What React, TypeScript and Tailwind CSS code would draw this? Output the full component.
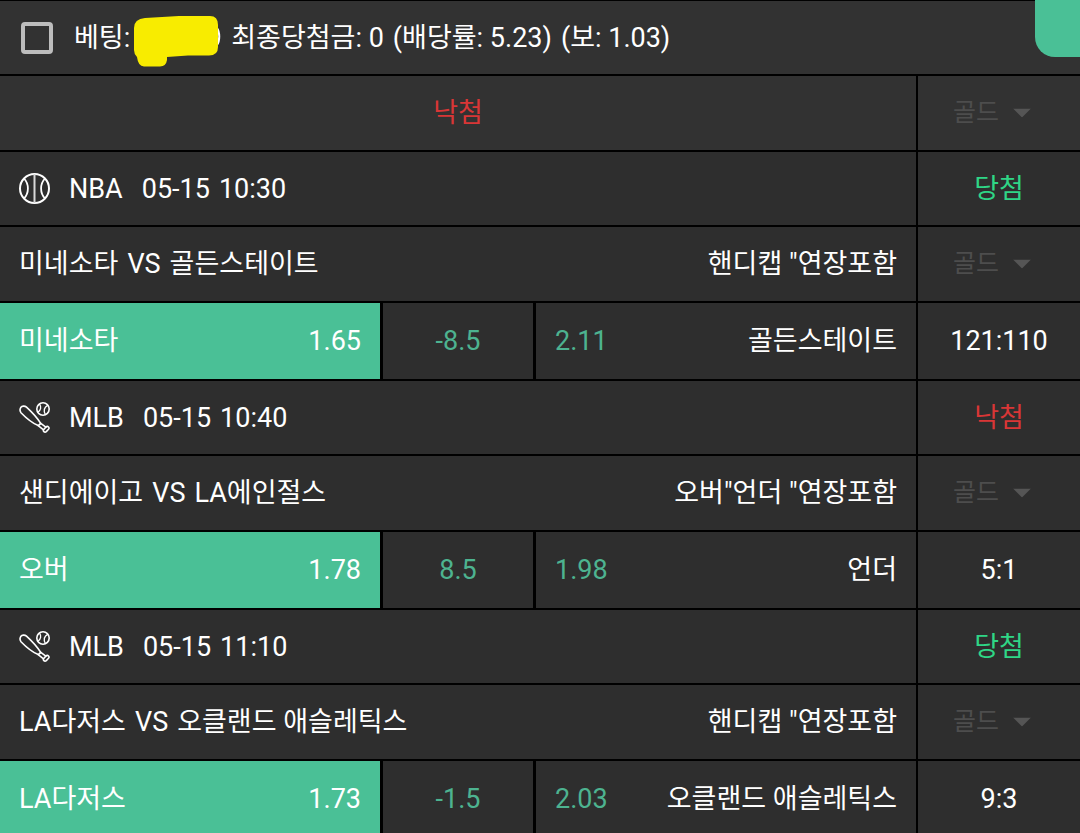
// src/pages/BetHistory.tsx
import { useState } from "react";

type Result = "win" | "lose";

interface Match {
    id: number;
    sport: "basketball" | "baseball";
    league: string;
    date: string;
    time: string;
    result: Result;
    teams: [string, string];
    market: string;
    home: string;
    homeOdds: string;
    line: string;
    awayOdds: string;
    away: string;
    score: string;
}

const matches: Match[] = [
    {
        id: 1,
        sport: "basketball",
        league: "NBA",
        date: "05-15",
        time: "10:30",
        result: "win",
        teams: ["미네소타", "골든스테이트"],
        market: '핸디캡 "연장포함',
        home: "미네소타",
        homeOdds: "1.65",
        line: "-8.5",
        awayOdds: "2.11",
        away: "골든스테이트",
        score: "121:110",
    },
    {
        id: 2,
        sport: "baseball",
        league: "MLB",
        date: "05-15",
        time: "10:40",
        result: "lose",
        teams: ["샌디에이고", "LA에인절스"],
        market: '오버"언더 "연장포함',
        home: "오버",
        homeOdds: "1.78",
        line: "8.5",
        awayOdds: "1.98",
        away: "언더",
        score: "5:1",
    },
    {
        id: 3,
        sport: "baseball",
        league: "MLB",
        date: "05-15",
        time: "11:10",
        result: "win",
        teams: ["LA다저스", "오클랜드 애슬레틱스"],
        market: '핸디캡 "연장포함',
        home: "LA다저스",
        homeOdds: "1.73",
        line: "-1.5",
        awayOdds: "2.03",
        away: "오클랜드 애슬레틱스",
        score: "9:3",
    },
];

const BasketballIcon = () => (
    <svg viewBox="0 0 31 31" className="size-[31px] shrink-0" fill="none" stroke="#fff" aria-hidden="true">
        <circle cx="15.5" cy="15.5" r="14.5" strokeWidth="2" />
        <path d="M15.5 1v29" strokeWidth="2" stroke="#d8d8d8" />
        <path d="M5 5.500c5.200 5.400 5.200 14.600 0 20M26 5.500c-5.200 5.400-5.200 14.600 0 20" strokeWidth="1.800" />
    </svg>
);

const BaseballIcon = () => (
    <svg
        viewBox="0 0 31 31"
        className="size-[31px] shrink-0"
        fill="none"
        stroke="#fff"
        strokeWidth="1.6"
        strokeLinecap="round"
        strokeLinejoin="round"
        aria-hidden="true"
    >
        <circle cx="24" cy="7" r="6.200" />
        <path d="M20.500 2.200c1.900 2.600 1.600 5.800-1.600 8M28.600 3.400c-3 1.800-4.200 5.300-2.300 9" strokeWidth="1.300" />
        <path d="M21.500 21.200C18.200 15.800 12.500 9.800 7.500 5.200 5.600 3.500 3 3.900 1.700 5.600.8 7.300.8 9.200 2 10.700 7 15.900 13.200 20.900 19.200 23.600" />
        <path d="M21.500 21.200l5.300 4M19.200 23.600l5.300 4.200M19.800 23.400l1.800-2" />
        <path d="M26.800 25.200c1-1 2-.9 2.700-.2.800.8.700 1.600 0 2.300l-2.200 2.300c-.8.700-1.700.7-2.400 0-.6-.6-.6-1.300-.4-1.800z" />
    </svg>
);

// marker scribble that hides the stake
const HiddenAmount = () => (
    <svg viewBox="0 0 87 59" className="h-[59px] w-[87px] shrink-0" role="img" aria-label="베팅 금액 숨김">
        <path d="M83 20c3 4 3 13 0 17" fill="none" stroke="#fff" strokeWidth="2" />
        <path
            d="M0 20Q0 11 11 10L45 8H76Q84 8 84 17V39Q84 47.500 75 47.500H54L33 49V52Q32 58.500 26 58.500H10Q4 58 3 49Q0 46 0 42Z"
            fill="#f8ec00"
        />
    </svg>
);

const ResultText = ({ result }: { result: Result }) =>
    result === "win" ? (
        <span className="text-[#2fd686]">당첨</span>
    ) : (
        <span className="text-[#d93636]">낙첨</span>
    );

const GoldSelect = ({ label }: { label: string }) => (
    <div className="relative w-[92px] text-[25px]">
        <select
            aria-label={label}
            disabled
            className="block w-full appearance-none bg-transparent leading-9 text-[#4d4d4d] opacity-100"
        >
            <option>골드</option>
        </select>
        <svg
            viewBox="0 0 18 9"
            className="pointer-events-none absolute top-1/2 right-[14px] h-[9px] w-[18px] -translate-y-1/2"
            aria-hidden="true"
        >
            <path d="M0 0h18L9 9z" fill="#555" />
        </svg>
    </div>
);

const MatchRows = ({ match }: { match: Match }) => {
    const cell = "flex items-center bg-[#2e2e2e]";

    return (
        <section className="flex flex-col gap-[2px]">
            <div className="flex h-[73px] gap-[2px]">
                <div className={`${cell} flex-1 gap-[19px] px-[19px]`}>
                    {match.sport === "basketball" ? <BasketballIcon /> : <BaseballIcon />}
                    <span>{match.league}</span>
                    <span className="flex gap-[9px]">
                        <span>{match.date}</span>
                        <span>{match.time}</span>
                    </span>
                </div>
                <div className={`${cell} w-[15%] justify-center`}>
                    <ResultText result={match.result} />
                </div>
            </div>

            <div className="flex h-[74px] gap-[2px]">
                <div className={`${cell} flex-1 justify-between px-[19px]`}>
                    <span className="flex gap-[9px]">
                        <span>{match.teams[0]}</span>
                        <span>VS</span>
                        <span>{match.teams[1]}</span>
                    </span>
                    <span>{match.market}</span>
                </div>
                <div className={`${cell} w-[15%] justify-center`}>
                    <GoldSelect label={`${match.league} ${match.date} ${match.time}`} />
                </div>
            </div>

            <div className="flex h-[76px] gap-[2px]">
                <div className="flex flex-1 gap-[3px]">
                    <div className="flex flex-1 items-center justify-between bg-[#4ac096] px-[19px]">
                        <span>{match.home}</span>
                        <span>{match.homeOdds}</span>
                    </div>
                    <div className={`${cell} w-[150px] justify-center text-[#4db390]`}>{match.line}</div>
                    <div className={`${cell} flex-1 justify-between px-[19px]`}>
                        <span className="text-[#4db390]">{match.awayOdds}</span>
                        <span>{match.away}</span>
                    </div>
                </div>
                <div className={`${cell} w-[15%] justify-center`}>{match.score}</div>
            </div>
        </section>
    );
};

const App = () => {
    const [checked, setChecked] = useState(false);

    return (
        <main className="relative flex max-h-screen flex-col gap-[2px] overflow-hidden bg-black pt-px font-['Roboto','Noto_Sans_CJK_KR',sans-serif] text-[27px] leading-9 whitespace-nowrap text-white *:shrink-0">
            <header className="flex h-[73px] items-center bg-[#323232] px-[21px]">
                <label className="flex items-center gap-[21px]">
                    <input
                        type="checkbox"
                        checked={checked}
                        onChange={(e) => setChecked(e.target.checked)}
                        className="size-8 appearance-none rounded-[4px] border-4 border-[#bdbdbd] checked:bg-[#4ac096]"
                    />
                    <span>베팅:</span>
                </label>
                <span className="ml-1 flex items-center gap-[10px]">
                    <HiddenAmount />
                    <span className="flex gap-[9px]">
                        <span>최종당첨금: 0</span>
                        <span>(배당률: 5.23)</span>
                        <span>(보: 1.03)</span>
                    </span>
                </span>
            </header>

            <div className="flex h-[74px] gap-[2px]">
                <div className="flex flex-1 items-center justify-center bg-[#323232]">
                    <ResultText result="lose" />
                </div>
                <div className="flex w-[15%] items-center justify-center bg-[#323232]">
                    <GoldSelect label="전체" />
                </div>
            </div>

            {matches.map((match) => (
                <MatchRows key={match.id} match={match} />
            ))}

            <button
                type="button"
                aria-label="메뉴"
                className="absolute top-0 right-0 h-[57px] w-[45px] rounded-bl-[20px] bg-[#4ac096]"
            />
        </main>
    );
};

export default App;
